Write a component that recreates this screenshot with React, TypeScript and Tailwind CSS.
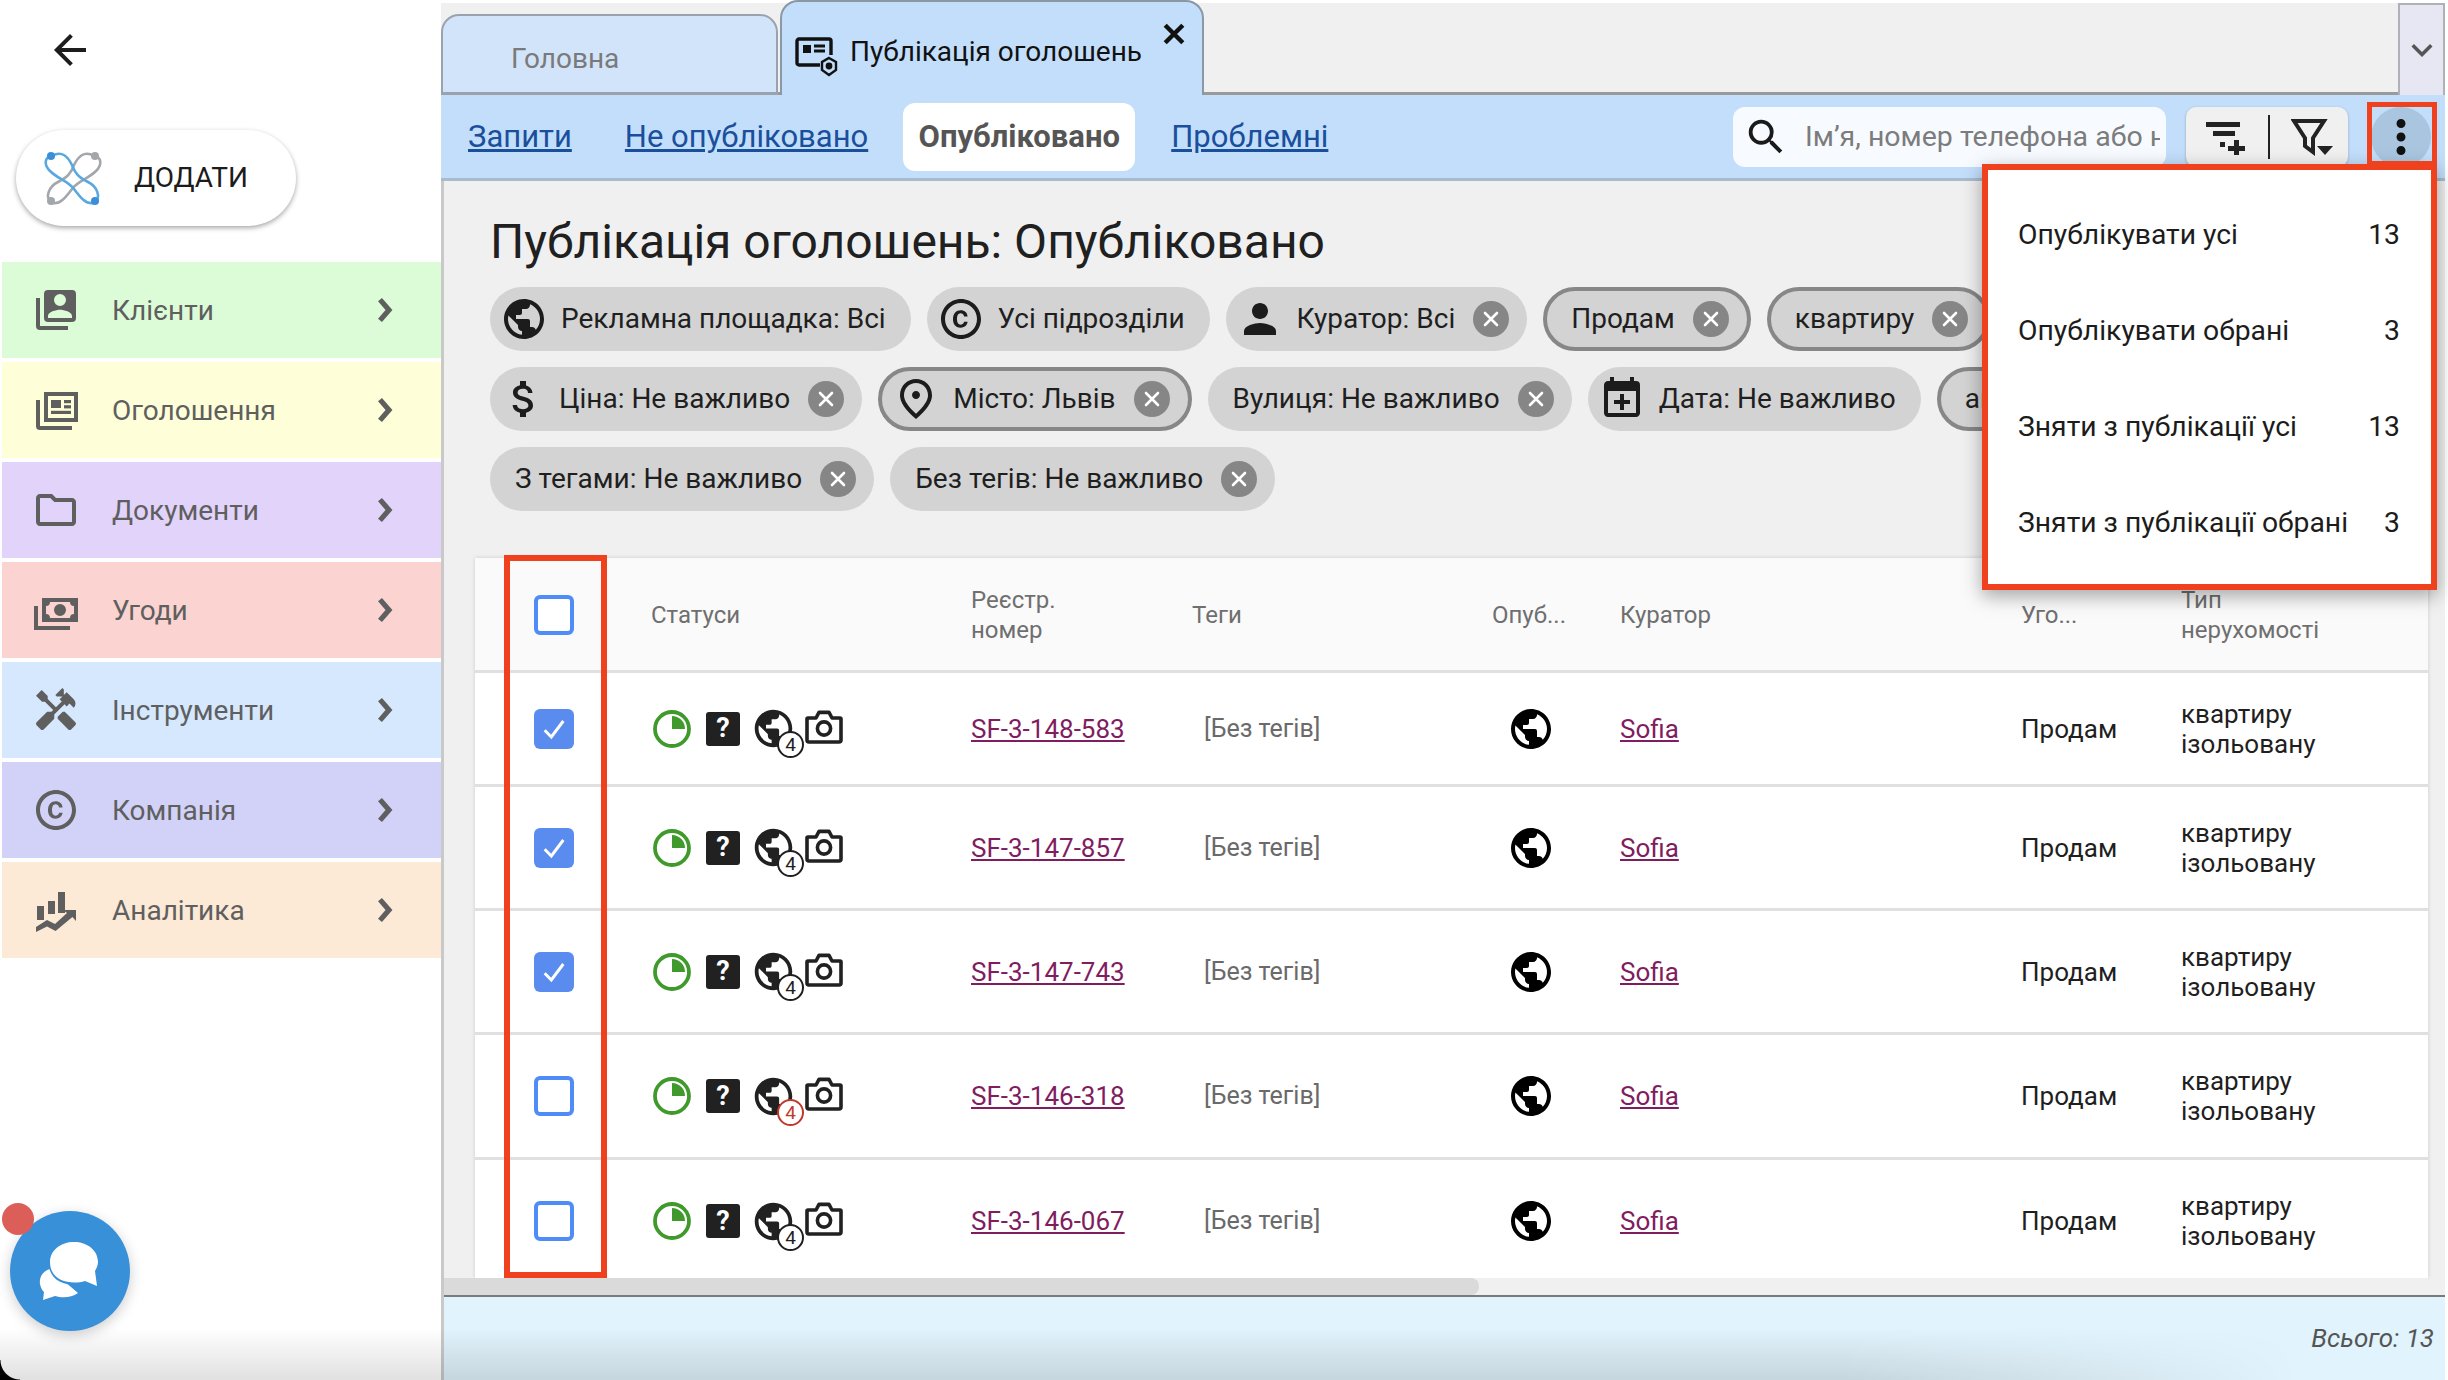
import React from "react";
import {
  MdPublic,
  MdCopyright,
  MdPerson,
  MdAttachMoney,
  MdOutlinePlace,
  MdOutlineFolder,
  MdHandyman,
  MdMoreVert,
  MdSearch,
  MdKeyboardArrowDown,
  MdArrowBack,
} from "react-icons/md";

const P = ({ d, className }: { d: string; className?: string }) => (
  <svg viewBox="0 0 24 24" fill="currentColor" className={className}>
    <path d={d} />
  </svg>
);

const IconContacts = ({ className }: { className?: string }) => (
  <P className={className} d="M4,6H2V20A2,2 0 0,0 4,22H18V20H4V6M22,4V16A2,2 0 0,1 20,18H8A2,2 0 0,1 6,16V4A2,2 0 0,1 8,2H20A2,2 0 0,1 22,4M14,4A3,3 0 0,0 11,7A3,3 0 0,0 14,10A3,3 0 0,0 17,7A3,3 0 0,0 14,4M8,16H20V15C20,13 16,11.9 14,11.9C12,11.9 8,13 8,15V16Z" />
);
const IconNews = ({ className }: { className?: string }) => (
  <svg viewBox="0 0 24 24" fill="currentColor" className={className}>
    <path d="M2 7h2v13h16v2H4a2 2 0 0 1-2-2z" />
    <path fillRule="evenodd" d="M6 3h17v15H6zM8 5v11h13V5z" />
    <rect x="9.5" y="7" width="5" height="4" />
    <rect x="16" y="7" width="3.5" height="1.6" />
    <rect x="16" y="9.6" width="3.5" height="1.6" />
    <rect x="9.5" y="12.4" width="10" height="1.6" />
  </svg>
);
const IconCash = ({ className }: { className?: string }) => (
  <P className={className} d="M5,6H23V18H5V6M14,9A3,3 0 0,1 17,12A3,3 0 0,1 14,15A3,3 0 0,1 11,12A3,3 0 0,1 14,9M9,8A2,2 0 0,1 7,10V14A2,2 0 0,1 9,16H19A2,2 0 0,1 21,14V10A2,2 0 0,1 19,8H9M1,10H3V20H19V22H1V10Z" />
);
const IconChart = ({ className }: { className?: string }) => (
  <svg viewBox="0 0 24 24" fill="currentColor" className={className}>
    <rect x="2.5" y="10" width="3.5" height="7" />
    <rect x="8" y="7.5" width="3.5" height="6.5" />
    <rect x="13" y="3" width="3.5" height="10.5" />
    <path d="M2 20.5l5.5-3.5 4 2 6-5.5-2-1.5H22v5.5l-1.8-2-8.4 7-4.3-2.2L2 23z" />
  </svg>
);
const IconCalendarPlus = ({ className }: { className?: string }) => (
  <P className={className} d="M19,19V8H5V19H19M16,1H18V3H19A2,2 0 0,1 21,5V19C21,20.11 20.1,21 19,21H5C3.89,21 3,20.1 3,19V5C3,3.89 3.9,3 5,3H6V1H8V3H16V1M11,9.5H13V12.5H16V14.5H13V17.5H11V14.5H8V12.5H11V9.5Z" />
);
const Chevron = () => (
  <svg viewBox="0 0 24 24" className="w-[48px] h-[48px]" fill="none" stroke="currentColor" strokeWidth="2.6">
    <path d="M9.5 6.8L14 12L9.5 17.2" />
  </svg>
);

const Logo = () => (
  <svg viewBox="0 0 58 58" className="w-[58px] h-[58px] blur-[0.7px]" fill="none" strokeWidth="2.6">
    <g stroke="#a3a7ab">
      <path d="M50 7C40 1 34 8 30 16C27 24 24 28 14 33C4 38 2 48 6 52" />
      <path d="M50 7C58 8 58 16 52 22C44 30 34 32 28 40C22 48 16 56 8 54" />
      <circle cx="51" cy="7" r="4" fill="#a3a7ab" stroke="none" />
      <circle cx="7" cy="52" r="4" fill="#a3a7ab" stroke="none" />
    </g>
    <g stroke="#5aa8e0">
      <path d="M8 7C18 1 24 8 28 16C31 24 34 28 44 33C54 38 56 48 52 52" />
      <path d="M8 7C0 8 0 16 6 22C14 30 24 32 30 40C36 48 42 56 50 54" />
      <circle cx="7" cy="7" r="4" fill="#3b8fd8" stroke="none" />
      <circle cx="51" cy="52" r="4" fill="#3b8fd8" stroke="none" />
    </g>
  </svg>
);

const nav = [
  { label: "Клієнти", bg: "bg-[#dcfcd8]", Icon: IconContacts },
  { label: "Оголошення", bg: "bg-[#fefed8]", Icon: IconNews },
  { label: "Документи", bg: "bg-[#e2d3fb]", Icon: MdOutlineFolder },
  { label: "Угоди", bg: "bg-[#fbd3d1]", Icon: IconCash },
  { label: "Інструменти", bg: "bg-[#d5e8fd]", Icon: MdHandyman },
  { label: "Компанія", bg: "bg-[#d2d2f8]", Icon: MdCopyright },
  { label: "Аналітика", bg: "bg-[#fce9d6]", Icon: IconChart },
];

const Chip = ({
  icon,
  text,
  del,
  outlined,
  tight,
}: {
  icon?: React.ReactNode;
  text: string;
  del?: boolean;
  outlined?: boolean;
  tight?: boolean;
}) => (
  <div
    className={
      "flex items-center h-[64px] rounded-[32px] bg-[#d3d3d3] shrink-0 " +
      (outlined ? "border-[4px] border-[#878787] " : "") +
      (icon ? "pl-[10px] " : outlined ? "pl-[24px] " : "pl-[25px] ") +
      (del ? "pr-[18px]" : "pr-[25px]")
    }
  >
    {icon && (
      <span className={"w-[48px] h-[48px] flex items-center justify-center text-[#1c1c1c] " + (tight ? "mr-[11px]" : "mr-[13px]")}>{icon}</span>
    )}
    <span className="text-[28px] leading-none text-[#1f1f1f] whitespace-nowrap">{text}</span>
    {del && (
      <span className="ml-[18px] w-[36px] h-[36px] rounded-full bg-[#868686] flex items-center justify-center">
        <svg viewBox="0 0 20 20" className="w-[20px] h-[20px]" stroke="white" strokeWidth="2.6" strokeLinecap="round">
          <path d="M4 4L16 16M16 4L4 16" />
        </svg>
      </span>
    )}
  </div>
);

const rows = [
  { id: "SF-3-148-583", h: "h-[114px]", checked: true, red: false },
  { id: "SF-3-147-857", h: "h-[124px]", checked: true, red: false },
  { id: "SF-3-147-743", h: "h-[124px]", checked: true, red: false },
  { id: "SF-3-146-318", h: "h-[125px]", checked: false, red: true },
  { id: "SF-3-146-067", h: "h-[125px]", checked: false, red: false },
];

const Check = ({ checked }: { checked: boolean }) =>
  checked ? (
    <div className="w-[40px] h-[40px] rounded-[6px] bg-[#5a8cf0] flex items-center justify-center">
      <svg viewBox="0 0 24 24" className="w-[32px] h-[32px]" fill="none" stroke="white" strokeWidth="2.2">
        <path d="M5 13l5 5 9-12" />
      </svg>
    </div>
  ) : (
    <div className="w-[40px] h-[40px] rounded-[6px] border-[4px] border-[#4f8cf7] bg-white" />
  );

const gridCols = "grid grid-cols-[176px_320px_221px_300px_128px_401px_160px_1fr] items-center";

const StatusIcons = ({ red }: { red: boolean }) => (
  <div className="flex items-center pl-[2px]">
    <svg viewBox="0 0 38 38" className="w-[38px] h-[38px]">
      <circle cx="19" cy="19" r="17" fill="none" stroke="#3f9a2b" strokeWidth="3.8" />
      <path d="M19 6A13 13 0 0 1 32 19H19z" fill="#3f9a2b" />
    </svg>
    <div className="ml-[15px] w-[34px] h-[34px] rounded-[3px] bg-[#212121] text-white flex items-center justify-center text-[27px] font-bold leading-none">?</div>
    <div className="relative ml-[15px] w-[37px] h-[37px] text-[#212121]">
      <MdPublic className="absolute -left-[4px] -top-[4px] w-[45px] h-[45px]" />
      <div
        className={
          "absolute left-[22px] top-[21px] w-[27px] h-[27px] rounded-full bg-white border-[2px] flex items-center justify-center text-[19px] leading-none " +
          (red ? "border-[#c0392b] text-[#c0392b]" : "border-[#1f1f1f] text-[#1f1f1f]")
        }
      >
        4
      </div>
    </div>
    <svg viewBox="0 0 38 34" className="ml-[13px] w-[38px] h-[34px] -translate-y-[2px]" fill="none" stroke="#212121" strokeWidth="3.6">
      <path d="M3 8h8l3-5.6h10L27 8h8a1 1 0 0 1 1 1v21a2 2 0 0 1-2 2H4a2 2 0 0 1-2-2V9a1 1 0 0 1 1-1z" strokeLinejoin="round" />
      <circle cx="19" cy="18.5" r="6.6" />
    </svg>
  </div>
);

export default function App() {
  return (
    <div className="relative flex w-[2448px] h-[1380px] overflow-hidden bg-white [font-family:Roboto,sans-serif]">
      {/* sidebar */}
      <aside className="w-[441px] shrink-0 pl-[2px] pt-[26px] flex flex-col relative">
        <MdArrowBack className="ml-[41px] w-[54px] h-[48px] text-[#1d1d1d]" />
        <button className="ml-[14px] mt-[56px] w-[280px] h-[96px] rounded-[48px] bg-white shadow-[0_2px_5px_rgba(0,0,0,0.35)] flex items-center pl-[28px]">
          <Logo />
          <span className="ml-[32px] text-[28px] text-[#1c1c1c]">ДОДАТИ</span>
        </button>
        <nav className="mt-[36px] flex flex-col gap-[4px]">
          {nav.map(({ label, bg, Icon }) => (
            <div key={label} className={"flex items-center h-[96px] pl-[30px] pr-[32px] text-[#5f5f5f] " + bg}>
              <Icon className="w-[48px] h-[48px]" />
              <span className="ml-[32px] pt-[2px] text-[28px] flex-1">{label}</span>
              <Chevron />
            </div>
          ))}
        </nav>
      </aside>

      {/* main */}
      <main className="w-[2004px] mt-[3px] flex flex-col bg-[#f0f0f0] relative">
        {/* tabs */}
        <div className="h-[92px] shrink-0 flex items-end border-b-[3px] border-[#9a9a9a] relative">
          <div className="w-[337px] h-[81px] -mb-[3px] rounded-t-[18px] bg-[#d2e4fa] border-[2px] border-b-[3px] border-[#9aa3ad] pl-[68px] pt-[10px] flex items-center text-[28px] text-[#7a7a7a]">
            Головна
          </div>
          <div className="ml-[2px] w-[424px] h-[95px] -mb-[3px] rounded-t-[18px] bg-[#c2defb] border-[2px] border-b-0 border-[#8a97a5] flex items-center pl-[12px] relative z-10">
            <svg viewBox="0 0 44 40" className="w-[44px] h-[40px] mt-[16px] text-[#111]" fill="none" stroke="currentColor" strokeWidth="3.4">
              <path d="M26 28H5a2 2 0 0 1-2-2V4a2 2 0 0 1 2-2h30a2 2 0 0 1 2 2v14" />
              <rect x="9" y="8" width="8" height="8" fill="currentColor" stroke="none" />
              <path d="M20 9h11M20 14h11" strokeWidth="3" />
              <path d="M35 21l7 4v8l-7 5-7-5v-8z" strokeWidth="2.4" fill="#c2defb" />
              <circle cx="35" cy="29" r="3.4" fill="currentColor" stroke="none" />
            </svg>
            <span className="ml-[12px] mt-[6px] text-[28px] text-[#111] whitespace-nowrap">Публікація оголошень</span>
            <svg viewBox="0 0 20 20" className="absolute left-[381px] top-[21px] w-[22px] h-[22px]" stroke="#111" strokeWidth="4">
              <path d="M2 2L18 18M18 2L2 18" />
            </svg>
          </div>
          <div className="ml-auto w-[47px] h-[92px] -mb-[3px] bg-[#e6e7f2] border-[2px] border-b-0 border-[#b0b0b8] flex items-center justify-center">
            <MdKeyboardArrowDown className="w-[42px] h-[42px] text-[#555]" />
          </div>
        </div>

        {/* toolbar */}
        <div className="h-[86px] shrink-0 bg-[#c2defb] border-b-[3px] border-[#a9bccf] flex items-center pl-[11px] pr-[14px] text-[31px]">
          <a className="px-[16px] pt-[2px] underline text-[#1a4f9c]">Запити</a>
          <a className="ml-[21px] px-[16px] pt-[2px] underline text-[#1a4f9c]">Не опубліковано</a>
          <div className="ml-[19px] h-[68px] w-[232px] pt-[2px] flex items-center justify-center rounded-[12px] bg-white font-bold text-[#555] text-[31px]">Опубліковано</div>
          <a className="ml-[20px] px-[16px] pt-[2px] underline text-[#1a4f9c]">Проблемні</a>
          <div className="ml-auto h-[60px] w-[433px] rounded-[12px] bg-[#f7fbff] flex items-center pl-[10px] pr-[6px]">
            <MdSearch className="w-[46px] h-[46px] text-[#1a1a1a] shrink-0" />
            <span className="ml-[16px] pt-[2px] text-[28.5px] text-[#7c7c7c] whitespace-nowrap overflow-hidden">Ім’я, номер телефона або номер</span>
          </div>
          <div className="ml-[20px] h-[60px] w-[162px] rounded-[10px] bg-[#f0f0f0] flex items-center shadow-[0_1px_3px_rgba(0,0,0,0.25)]">
            <svg viewBox="0 0 40 36" className="ml-[20px] w-[40px] h-[36px] text-[#222]" fill="currentColor">
              <rect x="0" y="3" width="34" height="5" />
              <rect x="7" y="12" width="22" height="5" />
              <rect x="14" y="23" width="5" height="5" />
              <path d="M28 21h5v6h6v5h-6v6h-5v-6h-6v-5h6z" />
            </svg>
            <div className="ml-[22px] w-[2px] h-[44px] bg-[#222]" />
            <svg viewBox="0 0 44 38" className="ml-[21px] w-[44px] h-[38px] text-[#222]" fill="none" stroke="currentColor" strokeWidth="4">
              <path d="M3 3H33L22 20V34L14 28V20z" />
              <path d="M26 28H42L34 37z" fill="currentColor" stroke="none" />
            </svg>
          </div>
          <div className="ml-[23px] w-[60px] h-[60px] rounded-full bg-[#a9c5e0] flex items-center justify-center">
            <MdMoreVert className="w-[54px] h-[54px] text-[#111]" />
          </div>
        </div>

        {/* content */}
        <div className="flex-1 min-h-0 flex flex-col border-l-[3px] border-[#c9c9c9]">
          <div className="pl-[46px] pt-[31px]">
            <h1 className="text-[48px] leading-[60px] text-[#202020] font-normal">Публікація оголошень: Опубліковано</h1>
            <div className="mt-[15px] w-[1850px] flex flex-wrap gap-[16px]">
              <Chip icon={<MdPublic className="w-[48px] h-[48px]" />} text="Рекламна площадка: Всі" />
              <Chip icon={<MdCopyright className="w-[48px] h-[48px]" />} text="Усі підрозділи" />
              <Chip icon={<MdPerson className="w-[48px] h-[48px]" />} text="Куратор: Всі" del />
              <Chip outlined text="Продам" del />
              <Chip outlined text="квартиру" del />
              <Chip tight icon={<MdAttachMoney className="w-[48px] h-[48px]" />} text="Ціна: Не важливо" del />
              <Chip outlined icon={<MdOutlinePlace className="w-[48px] h-[48px]" />} text="Місто: Львів" del />
              <Chip text="Вулиця: Не важливо" del />
              <Chip icon={<IconCalendarPlus className="w-[48px] h-[48px]" />} text="Дата: Не важливо" />
              <Chip outlined text="активні" del />
              <Chip text="З тегами: Не важливо" del />
              <Chip text="Без тегів: Не важливо" del />
            </div>
          </div>

          {/* table */}
          <div className="mt-[47px] ml-[31px] mr-[17px] h-[720px] overflow-hidden bg-white shadow-[0_0_4px_rgba(0,0,0,0.15)]">
            <div className={gridCols + " h-[115px] pt-[2px] bg-[#fafafa] border-b-[3px] border-[#e0e0e0] text-[24px] leading-[30px] text-[#6f6f6f]"}>
              <div className="pl-[59px]"><Check checked={false} /></div>
              <div>Статуси</div>
              <div>Реєстр.<br />номер</div>
              <div>Теги</div>
              <div>Опуб...</div>
              <div>Куратор</div>
              <div>Уго...</div>
              <div>Тип<br />нерухомості</div>
            </div>
            {rows.map((r) => (
              <div key={r.id} className={gridCols + " border-b-[3px] border-[#e0e0e0] text-[26px] leading-[30px] text-[#1f1f1f] " + r.h}>
                <div className="pl-[59px]"><Check checked={r.checked} /></div>
                <StatusIcons red={r.red} />
                <a className="underline text-[#7f1d5f]">{r.id}</a>
                <div className="pl-[12px] text-[25px] text-[#6a6a6a]">[Без тегів]</div>
                <div className="pl-[15px] text-black"><MdPublic className="w-[48px] h-[48px]" /></div>
                <a className="underline text-[#7f1d5f]">Sofia</a>
                <div>Продам</div>
                <div>квартиру<br />ізольовану</div>
              </div>
            ))}
          </div>

          {/* scrollbar */}
          <div className="h-[17px] shrink-0 mr-[17px] bg-[#f0f0f0]">
            <div className="h-full w-[1035px] rounded-r-[8px] bg-[#dadada]" />
          </div>

          {/* footer */}
          <div className="flex-1 border-t-[2px] border-[#7a7a7a] bg-[#e1f3fc] flex items-center justify-end pr-[11px]">
            <span className="italic text-[26px] text-[#555]">Всього: 13</span>
          </div>
        </div>
      </main>

      {/* dropdown menu */}
      <div className="absolute left-[1982px] top-[164px] w-[455px] h-[426px] bg-white border-[6px] border-[#f0411f] shadow-[0_6px_18px_rgba(0,0,0,0.35)] pt-[17px] pl-[30px] pr-[31px] z-20">
        {[
          ["Опублікувати усі", "13"],
          ["Опублікувати обрані", "3"],
          ["Зняти з публікації усі", "13"],
          ["Зняти з публікації обрані", "3"],
        ].map(([t, n]) => (
          <div key={t} className="h-[96px] flex items-center justify-between text-[28.3px] text-[#1c1c1c] whitespace-nowrap">
            <span>{t}</span>
            <span>{n}</span>
          </div>
        ))}
      </div>

      {/* annotation frames */}
      <div className="absolute left-[2367px] top-[102px] w-[70px] h-[64px] border-[5px] border-[#f0411f] z-20" />
      <div className="absolute left-[504px] top-[555px] w-[103px] h-[723px] border-[6px] border-[#f0411f] z-20" />

      {/* chat launcher */}
      <div className="absolute left-[10px] top-[1211px] w-[120px] h-[120px] rounded-full bg-[#3890d8] shadow-[0_4px_14px_rgba(0,0,0,0.2)] z-20 flex items-center justify-center">
        <svg viewBox="0 0 120 120" className="w-[120px] h-[120px]">
          <path d="M40 58c-7 2-11 8-10 15 .5 4 3 7 4 8l-1 8 12-4c7 2 16 2 23-3z" fill="white" />
          <path d="M64 28c14 0 27 8 27 23 0 3-1 6-2 8l2 21-15-7c-14 3-37 0-37-20 0-15 12-25 25-25z" fill="#3890d8" />
          <path d="M64 31c13 0 24 8 24 20 0 4-2 7-3 9l2 15-12-5c-13 4-35 1-35-19 0-12 11-20 24-20z" fill="white" />
        </svg>
      </div>
      <div className="absolute left-[2px] top-[1203px] w-[32px] h-[32px] rounded-full bg-[#db5f58] z-30" />

      {/* window bottom shade */}
      <div className="absolute left-0 bottom-0 w-[2300px] h-[52px] bg-gradient-to-t from-black/12 to-transparent [mask-image:linear-gradient(to_right,black_80%,transparent)] pointer-events-none z-30" />
      <div className="absolute left-0 bottom-0 w-[20px] h-[20px] bg-black [mask-image:radial-gradient(circle_at_100%_0,transparent_19px,black_20px)] z-30" />
    </div>
  );
}
